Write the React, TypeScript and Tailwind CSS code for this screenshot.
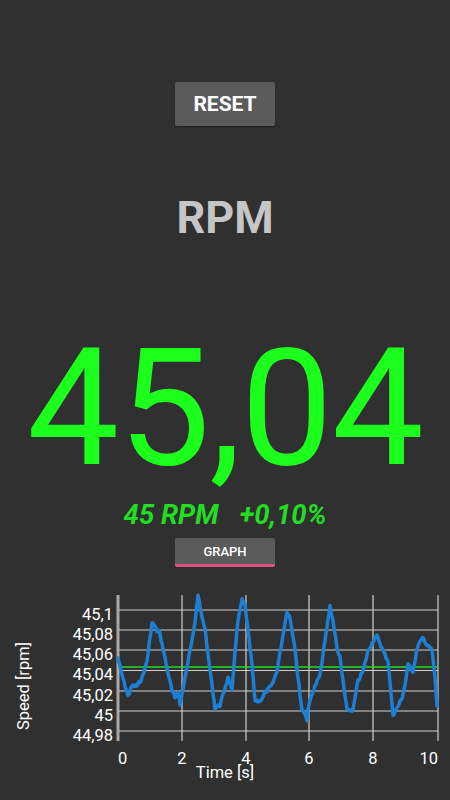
import React from "react";

// traced key points of the speed curve (svg coords, chart origin at page y=580)
const keyPoints: [number, number][] = [
  [118, 80], [122, 97], [128, 118], [132, 108], [137, 108], [142, 100], [147, 83],
  [152, 45], [154, 47], [157, 53], [159, 53], [163, 70], [167, 90], [172, 113],
  [175, 120], [178, 113], [180, 127], [185, 100], [190, 73], [195, 43], [198, 17],
  [202, 40], [205, 50], [208, 77], [212, 107], [215, 130], [220, 127], [225, 110],
  [228, 100], [232, 113], [235, 73], [238, 43], [242, 22], [245, 27], [248, 53],
  [252, 87], [255, 123], [260, 123], [265, 115], [272, 107], [277, 93], [282, 63],
  [287, 33], [290, 40], [295, 70], [298, 100], [302, 132], [305, 135], [307, 143],
  [308, 130], [313, 113], [320, 97], [325, 63], [330, 28], [333, 43], [337, 70],
  [340, 80], [343, 103], [347, 132], [353, 132], [358, 103], [363, 93], [368, 73],
  [373, 63], [377, 58], [380, 65], [383, 73], [388, 83], [393, 137], [397, 130],
  [402, 120], [405, 107], [408, 87], [413, 93], [418, 67], [423, 60], [427, 67],
  [432, 72], [435, 100], [437, 128],
];

const buildLine = () => {
  let seed = 7;
  const rand = () => {
    seed = (seed * 9301 + 49297) % 233280;
    return seed / 233280;
  };
  const pts: string[] = [];
  for (let i = 0; i < keyPoints.length - 1; i++) {
    const [x0, y0] = keyPoints[i];
    const [x1, y1] = keyPoints[i + 1];
    for (let x = x0; x < x1; x++) {
      const t = (x - x0) / (x1 - x0);
      const y = y0 + (y1 - y0) * t + (rand() - 0.5) * 3;
      pts.push(`${x},${y.toFixed(1)}`);
    }
  }
  const last = keyPoints[keyPoints.length - 1];
  pts.push(`${last[0]},${last[1]}`);
  return pts.join(" ");
};

const yTicks = [
  { label: "45,1", y: 32 },
  { label: "45,08", y: 52 },
  { label: "45,06", y: 72 },
  { label: "45,04", y: 92.5 },
  { label: "45,02", y: 113 },
  { label: "45", y: 133 },
  { label: "44,98", y: 153 },
];

const xTicks = [
  { label: "0", x: 118, anchor: "start" },
  { label: "2", x: 182, anchor: "middle" },
  { label: "4", x: 246, anchor: "middle" },
  { label: "6", x: 309, anchor: "middle" },
  { label: "8", x: 373, anchor: "middle" },
  { label: "10", x: 438, anchor: "end" },
];

const SpeedChart: React.FC = () => {
  return (
    <svg width="450" height="220" viewBox="0 0 450 220" className="block">
      {yTicks.map((t) => (
        <line key={t.label} x1="118" x2="438" y1={t.y} y2={t.y} stroke="#cfcfcf" strokeWidth="1.2" />
      ))}
      {xTicks.slice(1).map((t) => (
        <line key={t.label} x1={t.x} x2={t.x} y1="17" y2="163" stroke="#cfcfcf" strokeWidth="1.2" />
      ))}
      <line x1="118" x2="118" y1="17" y2="163" stroke="#a8a8a8" strokeWidth="3" />
      <line x1="118" x2="438" y1="89" y2="89" stroke="#22dd22" strokeWidth="1.5" />
      <polyline
        points={buildLine()}
        fill="none"
        stroke="#1c7fd3"
        strokeWidth="3.5"
        strokeLinejoin="round"
        strokeLinecap="round"
      />
      <g fill="#ffffff" fontFamily="Roboto, sans-serif" fontSize="16.5">
        {yTicks.map((t) => (
          <text key={t.label} x="113" y={t.y + 4} textAnchor="end" dominantBaseline="central">
            {t.label}
          </text>
        ))}
        {xTicks.map((t) => (
          <text
            key={t.label}
            x={t.x}
            y="180.5"
            textAnchor={t.anchor as "start" | "middle" | "end"}
            dominantBaseline="central"
          >
            {t.label}
          </text>
        ))}
        <text x="225" y="194" textAnchor="middle" dominantBaseline="central">
          Time [s]
        </text>
        <text
          x="23"
          y="108"
          textAnchor="middle"
          dominantBaseline="central"
          transform="rotate(-90 23 108)"
        >
          Speed [rpm]
        </text>
      </g>
    </svg>
  );
};

const App: React.FC = () => {
  return (
    <div className="w-[450px] h-[800px] bg-[#303030] overflow-hidden flex flex-col items-center font-['Roboto',sans-serif]">
      <button className="mt-[82px] w-[100px] h-[44px] rounded-[2px] bg-[#5b5b5b] text-white font-bold text-[21px] leading-none shadow-[0_1px_2px_rgba(0,0,0,0.4)]">
        RESET
      </button>

      <div className="mt-[69px] text-[45px] leading-none font-bold text-[#c6c6c6]">
        RPM
      </div>

      <div className="mt-[93px] text-[164px] leading-[150px] text-[#1cff1c] tracking-[-1px]">
        45,04
      </div>

      <div className="mt-[18px] flex gap-[21px] text-[27.5px] leading-none font-bold italic text-[#22dd22]">
        <span>45 RPM</span>
        <span>+0,10%</span>
      </div>

      <button className="mt-[9px] w-[100px] h-[29px] rounded-[2px] bg-[#5b5b5b] text-white font-medium text-[13px] leading-none border-b-[3px] border-[#d9537e] pt-[2px]">
        GRAPH
      </button>

      <div className="mt-[11px]">
        <SpeedChart />
      </div>
    </div>
  );
};

export default App;
